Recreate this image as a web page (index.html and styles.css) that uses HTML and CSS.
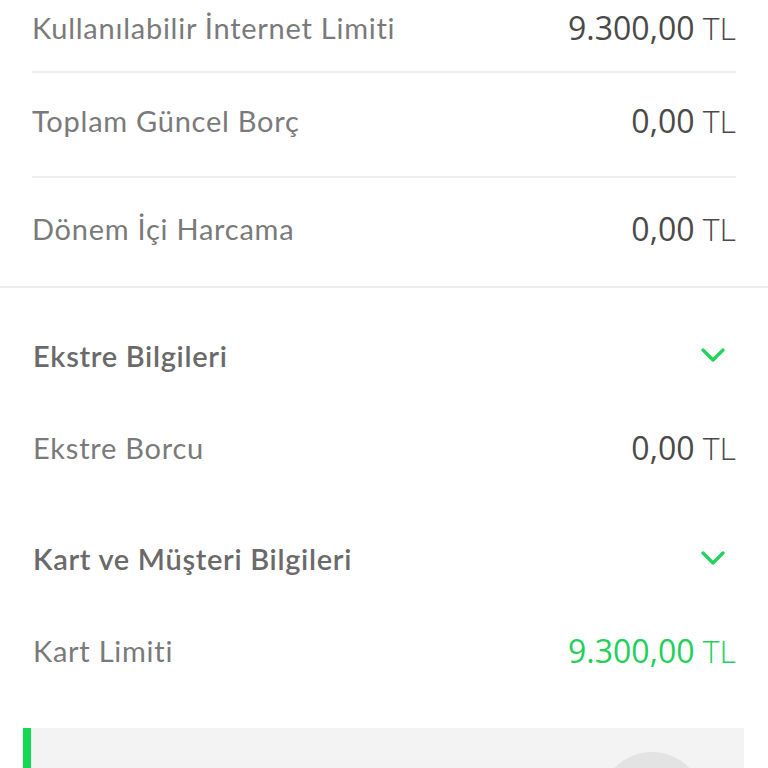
FILE: index.html
```html
<!DOCTYPE html>
<html lang="tr">
<head>
  <meta charset="UTF-8" />
  <meta name="viewport" content="width=device-width,initial-scale=1.0" />
  <title>Kart Detayı</title>
  <link rel="stylesheet" href="styles.css">
</head>
<body>
  <div class="summary">
    <div class="row">
      <span class="label">Kullanılabilir İnternet Limiti</span>
      <span class="amount">9.300,00 <small>TL</small></span>
    </div>
    <div class="row">
      <span class="label">Toplam Güncel Borç</span>
      <span class="amount">0,00 <small>TL</small></span>
    </div>
    <div class="row">
      <span class="label">Dönem İçi Harcama</span>
      <span class="amount">0,00 <small>TL</small></span>
    </div>
  </div>

  <!-- Ekstre -->
  <section class="group">
    <div class="group-head">
      <span>Ekstre Bilgileri</span>
      <svg class="chevron" viewBox="0 0 24 14" width="24" height="14"><path d="M2 2l10 10L22 2"/></svg>
    </div>
    <div class="group-row">
      <span class="label">Ekstre Borcu</span>
      <span class="amount">0,00 <small>TL</small></span>
    </div>
  </section>

  <!-- Kart / Müşteri -->
  <section class="group">
    <div class="group-head">
      <span>Kart ve Müşteri Bilgileri</span>
      <svg class="chevron" viewBox="0 0 24 14" width="24" height="14"><path d="M2 2l10 10L22 2"/></svg>
    </div>
    <div class="group-row">
      <span class="label">Kart Limiti</span>
      <span class="amount green">9.300,00 <small>TL</small></span>
    </div>
  </section>

  <div class="promo">
    <div class="promo-circle"></div>
  </div>
</body>
</html>
```

FILE: styles.css
```css
body{
  margin:0;
  background:#fff;
  font-family:"Lato","Noto Sans",sans-serif;
  height:768px;
  overflow:hidden;
}
/* ust ozet */
.summary{border-bottom:2px solid #ededed;}
.row{
  box-sizing:border-box;
  display:flex;justify-content:space-between;align-items:center;
  height:105px;margin:0 32px;padding-bottom:9px;
  border-bottom:2px solid #eeeeee;
}
.row:first-child{height:73px;padding-bottom:17px;}
.row:last-child{border-bottom:none;height:108px;padding-bottom:8px;}
.label{
  font-size:29px;font-weight:400;color:#7a7a7a;letter-spacing:.75px;
}
.amount{
  font-family:"Open Sans","Noto Sans",sans-serif;
  font-size:32px;font-weight:500;color:#4a4a4a;
}
.amount small{font-size:32px;font-weight:300;}
.amount.green{color:#1fd05a;}

.group{padding:44px 32px 21px 33px;}
.group-head{
  display:flex;justify-content:space-between;align-items:center;
  height:46px;
  font-size:29px;font-weight:600;color:#6a6a6a;letter-spacing:.7px;
}
.chevron{
  margin-right:11px;fill:none;stroke:#20d35b;stroke-width:3.2;
  stroke-linecap:round;stroke-linejoin:round;
}
.group-row{
  display:flex;justify-content:space-between;align-items:center;
  height:46px;margin-top:46px;
}

.promo{
  margin:34px 24px 0 23px;
  height:120px;
  background:#f3f3f3;
  border-left:8px solid #13d853;
  display:flex;justify-content:flex-end;
}
.promo-circle{
  width:104px;height:104px;border-radius:50%;
  background:#e3e3e3;
  margin:24px 40px 0 0;
}
```
